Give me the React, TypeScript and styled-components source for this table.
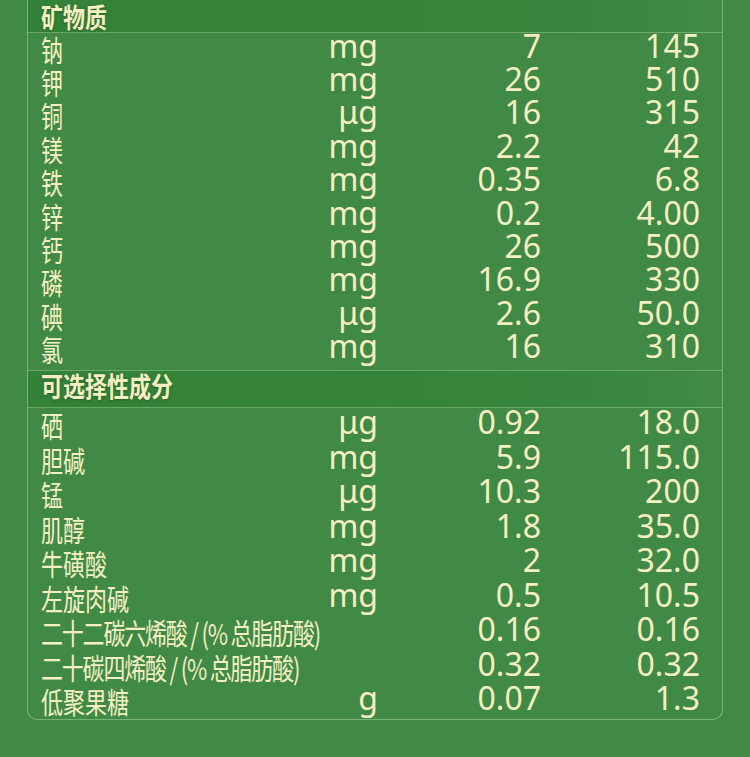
import React from 'react';
import styled, { createGlobalStyle } from 'styled-components';

const GlobalStyle = createGlobalStyle`
  html, body {
    margin: 0;
    padding: 0;
    background: #408a46;
  }
`;

const Page = styled.div`
  width: 750px;
  height: 757px;
  overflow: hidden;
  background: #408a46;
  color: #f5efc3;
  font-family: 'Noto Sans', 'Noto Sans CJK SC', sans-serif;
`;

const Panel = styled.div`
  margin-left: 27px;
  width: 694px;
  display: flex;
  flex-direction: column;
  border: 1px solid #79b276;
  border-top: none;
  border-radius: 0 0 10px 10px;
  padding-bottom: 4px;
`;

const Band = styled.div<{ $height: number; $top?: boolean; $offset?: number }>`
  height: ${(p) => p.$height}px;
  box-sizing: border-box;
  margin-top: ${(p) => p.$offset ?? 0}px;
  padding-left: 13px;
  display: flex;
  align-items: center;
  background: linear-gradient(90deg, #338238 0%, #358439 55%, #3a873f 85%, #418b46 100%);
  border-bottom: 1px solid rgba(150, 200, 140, 0.55);
  border-top: ${(p) => (p.$top ? '1px solid rgba(150, 200, 140, 0.55)' : 'none')};
`;

const BandTitle = styled.span<{ $shift: number }>`
  display: inline-block;
  font-family: 'Noto Sans CJK SC', sans-serif;
  font-weight: 700;
  font-size: 22px;
  line-height: 22px;
  transform: translateY(${(p) => p.$shift}px) scaleY(1.22);
  text-shadow: 0 1px 2px rgba(20, 60, 20, 0.5);
`;

const Section = styled.div<{ $offset: number }>`
  display: flex;
  flex-direction: column;
  margin-top: ${(p) => p.$offset}px;
`;

const Row = styled.div<{ $height: number }>`
  height: ${(p) => p.$height}px;
  display: grid;
  grid-template-columns: 257px 80px 163px 159px;
  align-items: center;
  padding: 0 22px 0 13px;
  white-space: nowrap;
`;

const Label = styled.span<{ $narrow?: boolean }>`
  display: inline-block;
  font-family: 'Noto Sans CJK SC', sans-serif;
  font-weight: 400;
  font-size: 22px;
  line-height: 22px;
  letter-spacing: ${(p) => (p.$narrow ? '-1.2px' : '0')};
  transform: translateY(3px) scaleY(1.32);
  transform-origin: left center;
`;

const Cell = styled.span`
  text-align: right;
  font-family: 'Noto Sans', sans-serif;
  font-size: 32px;
  line-height: 32px;
`;

type Item = [string, string, string, string];

const minerals: Item[] = [
  ['钠', 'mg', '7', '145'],
  ['钾', 'mg', '26', '510'],
  ['铜', 'μg', '16', '315'],
  ['镁', 'mg', '2.2', '42'],
  ['铁', 'mg', '0.35', '6.8'],
  ['锌', 'mg', '0.2', '4.00'],
  ['钙', 'mg', '26', '500'],
  ['磷', 'mg', '16.9', '330'],
  ['碘', 'μg', '2.6', '50.0'],
  ['氯', 'mg', '16', '310'],
];

const optional: Item[] = [
  ['硒', 'μg', '0.92', '18.0'],
  ['胆碱', 'mg', '5.9', '115.0'],
  ['锰', 'μg', '10.3', '200'],
  ['肌醇', 'mg', '1.8', '35.0'],
  ['牛磺酸', 'mg', '2', '32.0'],
  ['左旋肉碱', 'mg', '0.5', '10.5'],
  ['二十二碳六烯酸 / (% 总脂肪酸)', '', '0.16', '0.16'],
  ['二十碳四烯酸 / (% 总脂肪酸)', '', '0.32', '0.32'],
  ['低聚果糖', 'g', '0.07', '1.3'],
];

const renderRows = (items: Item[], height: number) =>
  items.map(([name, unit, per100kj, per100g]) => (
    <Row key={name} $height={height}>
      <Label $narrow={name.length > 8}>{name}</Label>
      <Cell>{unit}</Cell>
      <Cell>{per100kj}</Cell>
      <Cell>{per100g}</Cell>
    </Row>
  ));

const App: React.FC = () => {
  return (
    <Page>
      <GlobalStyle />
      <Panel>
        <Band $height={33}>
          <BandTitle $shift={0}>矿物质</BandTitle>
        </Band>
        <Section $offset={-4}>{renderRows(minerals, 33.4)}</Section>

        <Band $height={38} $top $offset={7}>
          <BandTitle $shift={-4}>可选择性成分</BandTitle>
        </Band>
        <Section $offset={-3}>{renderRows(optional, 34.5)}</Section>
      </Panel>
    </Page>
  );
};

export default App;
